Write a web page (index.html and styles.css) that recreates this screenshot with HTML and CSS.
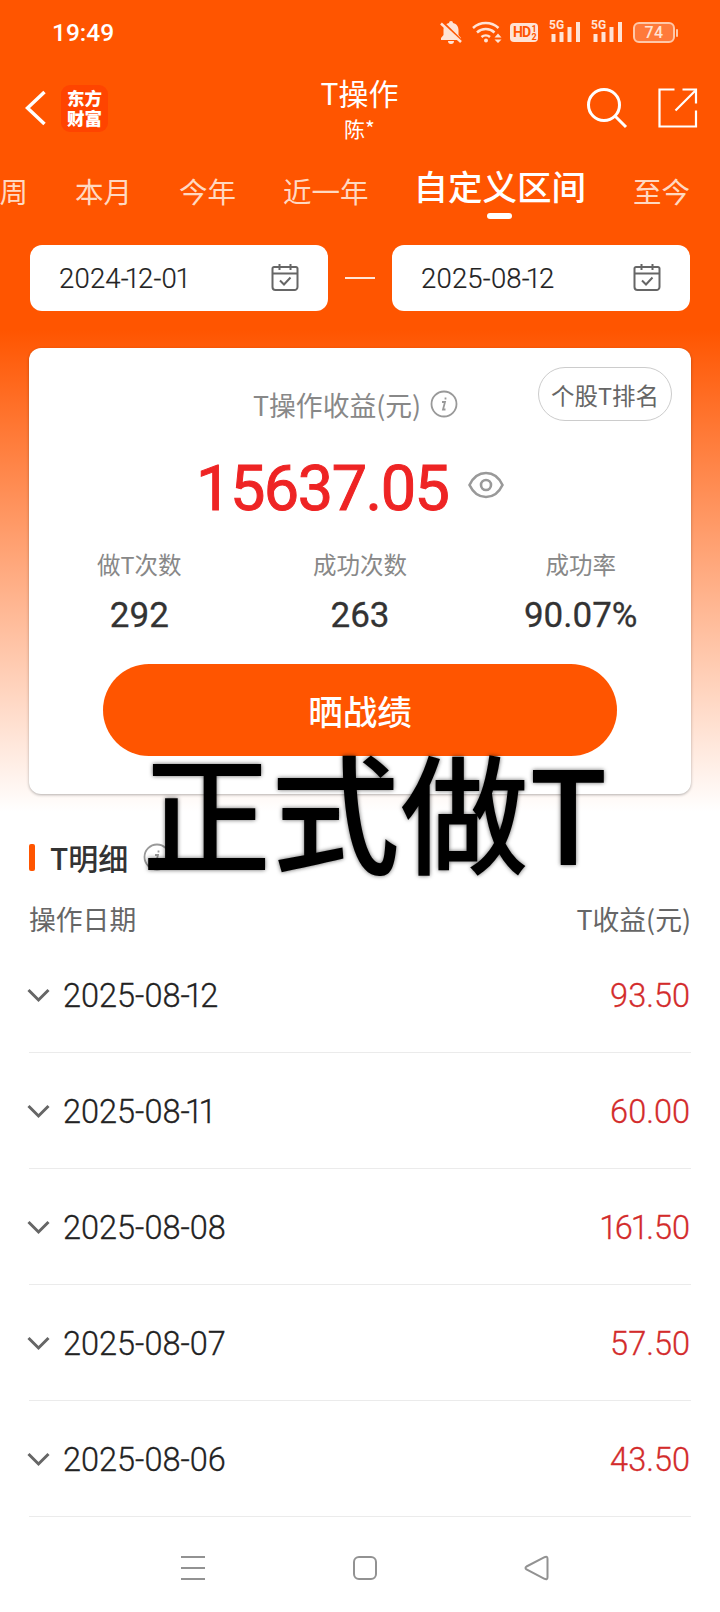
FILE: index.html
```
<!DOCTYPE html>
<html lang="zh-CN">
	<head>
		<meta charset="utf-8">
		<title>T操作</title>
		<link rel="stylesheet" href="styles.css">
	</head>
	<body>
		<svg class="symbols" width="0" height="0">
			<symbol id="calendar" viewBox="0 0 28 28">
				<path d="M3 3h22a1.500 1.500 0 0 1 1.500 1.500V23a3 3 0 0 1-3 3H4.500a3 3 0 0 1-3-3V4.500A1.500 1.500 0 0 1 3 3zM1.500 9.500h25M8.500 0v6M19.500 0v6M9 16.500l4 4 6.500-7"/>
			</symbol>
			<symbol id="info" viewBox="0 0 28 28">
				<circle cx="14" cy="14" r="12.500"/>
				<path d="M12 12h3l-2 7.500h2.500M15.500 7.500v2" />
			</symbol>
			<symbol id="down" viewBox="0 0 24 16">
				<path d="M1.500 2l10 10 10-10"/>
			</symbol>
			<symbol id="signal" viewBox="0 0 32 24">
				<path d="M2.500 14h4v8h-4zM10.500 12h4v10h-4zM18.500 7h4v15h-4zM27 2h4v20h-4z"/>
			</symbol>
		</svg>

		<section id="top">
			<div class="status">
				<span class="time">19:49</span>
				<div class="status-icons">
					<svg class="bell" width="22" height="24" viewBox="0 0 22 24">
						<path d="M11 1a2 2 0 0 0-2 2C5 4 3.500 7 3.500 10v5L1 18v2h20v-2l-2.500-3v-5c0-3-1.500-6-5.500-7a2 2 0 0 0-2-2zM8 21a3 3 0 0 0 6 0z"/>
						<path class="slash" d="M0 0l22 21.500"/>
						<path class="line" d="M1 3.500l20 18.500"/>
					</svg>
					<svg class="wifi" width="30" height="24" viewBox="0 0 30 24">
						<path class="line" d="M1 8a19 19 0 0 1 25.500 0M5 12.500a13 13 0 0 1 17.500 0M9.500 17a6.500 6.500 0 0 1 8.500 0"/>
						<circle cx="14" cy="20.500" r="2"/>
						<path d="M22.500 17.500L26 13.500l3.500 4zM22.500 19.500h7L26 23z"/>
					</svg>
					<span class="hd">HD<small>1<br>2</small></span>
					<span class="cell"><b>5G</b><svg width="32" height="24"><use href="#signal"/></svg></span>
					<span class="cell"><b>5G</b><svg width="32" height="24"><use href="#signal"/></svg></span>
					<span class="battery">74</span>
				</div>
			</div>

			<header>
				<div class="side">
					<svg class="back" width="22" height="36" viewBox="0 0 22 36"><path d="M19.500 2L2.500 18l17 16"/></svg>
					<span class="logo">东方<br>财富</span>
				</div>
				<div class="title">
					<h1>T操作</h1>
					<p>陈*</p>
				</div>
				<div class="side right">
					<svg width="42" height="42" viewBox="0 0 42 42"><circle cx="18" cy="18" r="15.500"/><path d="M29 29l11 11"/></svg>
					<svg class="share" width="40" height="40" viewBox="0 0 40 40"><path d="M16.500 1.500h-15v37h36.500V22.500M24.500 1.500H38v14M37 3L17.500 22.500"/></svg>
				</div>
			</header>

			<nav class="tabs">
				<span>周</span>
				<span>本月</span>
				<span>今年</span>
				<span>近一年</span>
				<span class="active">自定义区间</span>
				<span>至今</span>
			</nav>

			<div class="range">
				<div class="date"><span>2024-<i>1</i>2-0<i>1</i></span><svg width="28" height="28"><use href="#calendar"/></svg></div>
				<hr>
				<div class="date"><span>2025-08-<i>1</i>2</span><svg width="28" height="28"><use href="#calendar"/></svg></div>
			</div>
		</section>

		<section id="card">
			<div class="card-title">
				<span>T操作收益(元)</span>
				<svg class="info" width="28" height="28"><use href="#info"/></svg>
				<a class="rank">个股T排名</a>
			</div>
			<div class="profit">
				<strong>15637.05</strong>
				<svg width="36" height="28" viewBox="0 0 36 28"><path d="M1.500 14C9-2 27-2 34.500 14C27 30 9 30 1.500 14z"/><circle cx="18" cy="14" r="5"/></svg>
			</div>
			<div class="stats">
				<div><p>做T次数</p><b>292</b></div>
				<div><p>成功次数</p><b>263</b></div>
				<div><p>成功率</p><b>90.07%</b></div>
			</div>
			<button>晒战绩</button>
			<div class="caption">正式做T</div>
		</section>

		<section id="detail">
			<h2>T明细 <svg class="info" width="28" height="28"><use href="#info"/></svg></h2>
			<div class="head"><span>操作日期</span><span>T收益(元)</span></div>
			<ul>
				<li><svg width="24" height="16"><use href="#down"/></svg><span>2025-08-<i>1</i>2</span><b>93.50</b></li>
				<li><svg width="24" height="16"><use href="#down"/></svg><span>2025-08-<i>1</i><i>1</i></span><b>60.00</b></li>
				<li><svg width="24" height="16"><use href="#down"/></svg><span>2025-08-08</span><b><i>1</i>6<i>1</i>.50</b></li>
				<li><svg width="24" height="16"><use href="#down"/></svg><span>2025-08-07</span><b>57.50</b></li>
				<li><svg width="24" height="16"><use href="#down"/></svg><span>2025-08-06</span><b>43.50</b></li>
			</ul>
		</section>

		<footer>
			<svg width="26" height="26" viewBox="0 0 26 26"><path d="M1 2h24M1 13h24M1 24h24"/></svg>
			<svg width="26" height="26" viewBox="0 0 26 26"><rect x="2" y="2" width="22" height="22" rx="5"/></svg>
			<svg width="26" height="26" viewBox="0 0 26 26"><path d="M2.500 11.500L20.500 2.200q3-1.200 3 1.500v18.600q0 2.700-3 1.500L2.500 14.500q-2-1.500 0-3z"/></svg>
		</footer>
	</body>
</html>
```
FILE: styles.css
```
* {
	box-sizing: border-box;
}
body {
	margin: 0;
	height: 1612px;
	overflow: hidden;
	background: #fff linear-gradient(#f50 0, #f50 330px, #fff 812px) no-repeat;
	color: #333;
	font-family: "Noto Sans CJK SC", sans-serif;
}
h1, h2, p, ul {
	margin: 0;
	padding: 0;
	font-weight: normal;
}
svg {
	display: block;
	flex: none;
	fill: none;
	stroke: currentColor;
	stroke-width: 2;
}
.symbols {
	position: absolute;
}
/* narrow figure one */
i {
	margin: 0 -.08em 0 -.15em;
	font-style: normal;
}
i + i {
	margin-left: -.06em;
}

/* status bar */
#top {
	height: 348px;
	color: #fff;
}
.status {
	display: flex;
	justify-content: space-between;
	align-items: center;
	height: 64px;
	padding: 0 45px 0 52px;
}
.time {
	font: 500 24.5px Roboto, sans-serif;
}
.status-icons {
	display: flex;
	align-items: center;
	color: #ffe3d5;
}
.status-icons svg {
	fill: currentColor;
	stroke: none;
}
.status-icons .line {
	fill: none;
	stroke: currentColor;
	stroke-width: 2.5;
}
.status-icons .slash {
	stroke: #f50;
	stroke-width: 3;
}
.wifi {
	margin-left: 10px;
}
.hd {
	display: flex;
	align-items: center;
	width: 28px;
	height: 19px;
	margin: 1px 11px 0 8px;
	padding-left: 3px;
	border-radius: 4px;
	background: #ffe3d5;
	color: #f50;
	font: bold 14px/19px Roboto, sans-serif;
	letter-spacing: -.8px;
}
.hd small {
	font-size: 9px;
	line-height: 8px;
	margin-left: 1px;
}
.cell {
	position: relative;
	width: 32px;
	margin-right: 10px;
}
.cell b {
	position: absolute;
	left: 0;
	top: -1px;
	font: bold 12px/12px Roboto, sans-serif;
}
.battery {
	position: relative;
	width: 42px;
	height: 21px;
	border: 2px solid #ffc8a8;
	border-radius: 6px;
	background: #ff7a3a;
	text-align: center;
	font: 500 16px/18px Roboto, sans-serif;
	letter-spacing: .5px;
}
.battery::after {
	content: "";
	position: absolute;
	right: -5px;
	top: 5px;
	width: 2px;
	height: 8px;
	border-radius: 1px;
	background: #ffc8a8;
}

/* header */
header {
	display: flex;
	height: 90px;
	padding: 0 22px 0 25px;
}
.side {
	display: flex;
	align-items: center;
	width: 160px;
	height: 88px;
}
.side.right {
	width: 164px;
	justify-content: flex-end;
	gap: 30px;
}
.side svg {
	stroke-width: 3;
}
.side .back {
	stroke-width: 3.5;
}
.side .share {
	stroke-width: 2.2;
}
.logo {
	width: 47px;
	height: 47px;
	margin-left: 14px;
	padding-top: 3px;
	border-radius: 9px;
	background: #ff4400;
	text-align: center;
	font-size: 17.5px;
	font-weight: 900;
	line-height: 20px;
}
.title {
	flex: 1;
	text-align: center;
}
h1 {
	padding-top: 7px;
	font-size: 30px;
	line-height: 42px;
}
.title p {
	font-size: 21px;
	line-height: 31px;
}

.tabs {
	display: flex;
	justify-content: flex-end;
	align-items: center;
	gap: 47px;
	height: 73px;
	padding-right: 30px;
	color: #ffd9c2;
	font-size: 28.5px;
	line-height: 40px;
	white-space: nowrap;
}
.tabs .active {
	position: relative;
	top: -6px;
	margin-left: -2px;
	color: #fff;
	font-size: 34.5px;
	font-weight: 500;
}
.active::after {
	content: "";
	position: absolute;
	left: 50%;
	top: 48px;
	width: 25px;
	height: 6px;
	margin-left: -13px;
	border-radius: 3px;
	background: #fff;
}

.range {
	display: flex;
	align-items: center;
	justify-content: space-between;
	margin-top: 18px;
	padding: 0 30px;
}
.range hr {
	width: 30px;
	height: 2px;
	margin: 0;
	border: none;
	background: #ffe6d8;
}
.date {
	display: flex;
	align-items: center;
	justify-content: space-between;
	width: 298px;
	height: 66px;
	padding: 0 29px;
	border-radius: 12px;
	background: #fff;
	color: #666;
}
.date span {
	color: #222;
	font: 300 27.5px Roboto, sans-serif;
	padding-top: 1px;
	letter-spacing: .2px;
	white-space: nowrap;
	-webkit-text-stroke: .2px #222;
}

/* summary */
#card {
	position: relative;
	width: 662px;
	height: 446px;
	margin: 0 auto;
	border-radius: 12px;
	background: #fff;
	box-shadow: 0 1px 3px rgba(0, 0, 0, .3);
}
.card-title {
	display: flex;
	align-items: center;
	height: 112px;
	padding-left: 224px;
	color: #888;
	font-size: 26.8px;
}
.info {
	color: #999;
	margin-left: 9px;
	stroke-width: 1.8;
}
.rank {
	position: absolute;
	right: 19px;
	top: 19px;
	width: 134px;
	height: 54px;
	border: 1px solid #ccc;
	border-radius: 27px;
	color: #666;
	text-align: center;
	font-size: 23.5px;
	line-height: 54px;
}
.profit {
	display: flex;
	align-items: center;
	height: 50px;
	padding-left: 167px;
	color: #999;
}
.profit strong {
	width: 272px;
	padding-top: 6px;
	color: #ee2424;
	font: 400 63px Roboto, sans-serif;
	letter-spacing: -1.5px;
	-webkit-text-stroke: 1px #ee2424;
}
.profit svg {
	margin-top: -1px;
	stroke-width: 2.6;
}
.stats {
	display: flex;
	margin-top: 36px;
	text-align: center;
}
.stats div {
	flex: 1;
}
.stats p {
	color: #888;
	font-size: 23.5px;
	line-height: 36px;
}
.stats b {
	display: block;
	font: 400 35px/40px Roboto, sans-serif;
	margin-top: 14px;
	-webkit-text-stroke: .3px #333;
}
button {
	display: block;
	width: 514px;
	height: 92px;
	margin: 28px auto 0;
	padding: 0;
	border: none;
	border-radius: 46px;
	background: #f50;
	color: #fff;
	font: 500 34.5px "Noto Sans CJK SC", sans-serif;
}
.caption {
	position: absolute;
	left: 113px;
	top: 396px;
	color: #000;
	font-size: 129px;
	font-weight: 500;
	line-height: 130px;
	white-space: nowrap;
	text-shadow: 0 0 4px rgba(0, 0, 0, .6);
}

/* records */
#detail {
	padding: 0 29px;
}
h2 {
	display: flex;
	align-items: center;
	height: 40px;
	margin-top: 43px;
	font-size: 30px;
	font-weight: 500;
}
h2::before {
	content: "";
	width: 6px;
	height: 27px;
	margin-right: 15px;
	border-radius: 2px;
	background: #f50;
}
h2 .info {
	margin-left: 15px;
}
.head {
	display: flex;
	justify-content: space-between;
	height: 60px;
	padding-top: 22px;
	color: #666;
	font-size: 26.8px;
	line-height: 40px;
}
ul {
	list-style: none;
}
li {
	display: flex;
	align-items: center;
	height: 116px;
	padding-top: 3px;
	border-bottom: 1px solid #ebebeb;
	font: 300 32.5px Roboto, sans-serif;
	color: #222;
	white-space: nowrap;
	-webkit-text-stroke: .3px currentColor;
}
li svg {
	margin: 0 12px 0 -2px;
	color: #666;
	stroke-width: 3;
}
li b {
	margin-left: auto;
	margin-right: 1px;
	color: #d32b2b;
	font-weight: 300;
}

footer {
	display: flex;
	justify-content: space-between;
	padding: 38px 170px 0 180px;
	color: #929292;
}
```
